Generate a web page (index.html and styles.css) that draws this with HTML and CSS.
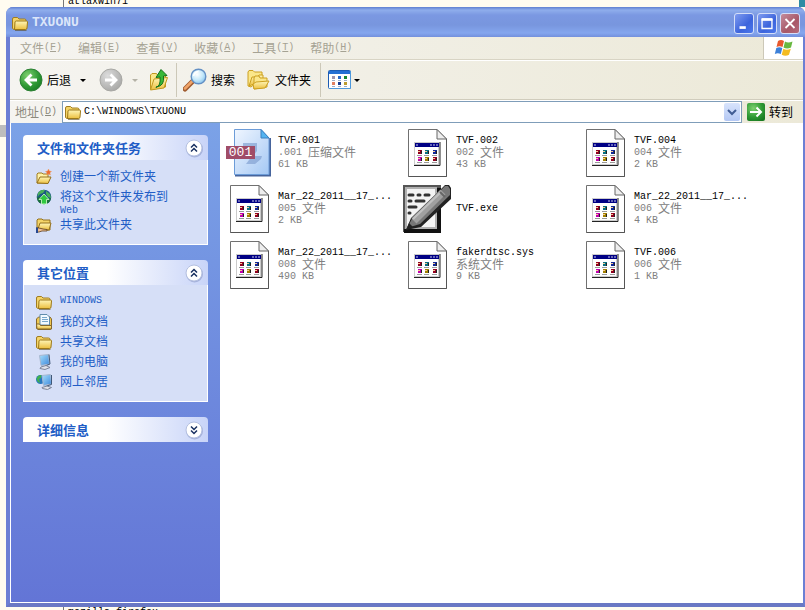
FILE: index.html
```html
<!DOCTYPE html>
<html lang="zh-CN">
<head>
<meta charset="utf-8">
<title>TXUONU</title>
<link rel="stylesheet" href="styles.css">
</head>
<body>
<svg class="defs" aria-hidden="true">
  <defs>
    <linearGradient id="gold" x1="0" y1="0" x2="0" y2="1"><stop offset="0" stop-color="#fff6b8"/><stop offset="1" stop-color="#ecc040"/></linearGradient>
    <radialGradient id="green" cx=".35" cy=".3" r=".8"><stop offset="0" stop-color="#7fd070"/><stop offset=".6" stop-color="#2f9a35"/><stop offset="1" stop-color="#187a22"/></radialGradient>
    <radialGradient id="grey" cx=".35" cy=".3" r=".8"><stop offset="0" stop-color="#dcdcdc"/><stop offset="1" stop-color="#a4a4a2"/></radialGradient>
    <radialGradient id="lens" cx=".4" cy=".35" r=".8"><stop offset="0" stop-color="#fff"/><stop offset=".5" stop-color="#c4e8fa"/><stop offset="1" stop-color="#6eb4e8"/></radialGradient>
    <linearGradient id="zip" x1="0" y1="0" x2="1" y2="1"><stop offset="0" stop-color="#f0f6ff"/><stop offset="1" stop-color="#a4c8f4"/></linearGradient>
    <linearGradient id="screen" x1="0" y1="0" x2="1" y2="1"><stop offset="0" stop-color="#a8e0fc"/><stop offset="1" stop-color="#3c88dc"/></linearGradient>
    <symbol id="folder" viewBox="0 0 16 16">
      <path d="M.5 13.500V4q0-1.500 1.500-1.500h3.500l1.500 1.500h5.500q1.500 0 1.500 1.500V13l-1 1.500H2z" fill="#f4d468" stroke="#a07c20"/>
      <path d="M3 7q.3-1 1.300-1H14.500q1 0 1 1L15 13q0 1.500-1.500 1.500H2.500z" fill="url(#gold)" stroke="#9c7818"/>
      <path d="M3 15.500h11.500" stroke="#5c4c20" opacity=".6"/>
    </symbol>
    <symbol id="newfolder" viewBox="0 0 16 16">
      <path d="M1 14V5l1-1h4l1 1h5v9z" fill="#fff2a8" stroke="#a07c20"/>
      <path d="M1 14 4 8h11l-3 6.500z" fill="url(#gold)" stroke="#94701c"/>
      <path d="m12.500 0 .9 2 2.100.5-1.600 1.300.5 2.200-1.900-1.100-2 1.100.5-2.200L9.500 2.500l2.100-.4z" fill="#e86830" stroke="#f4a060" stroke-width=".5"/>
    </symbol>
    <symbol id="publish" viewBox="0 0 16 16">
      <circle cx="8" cy="8" r="7.300" fill="#1c5884"/>
      <path d="M2 4Q5 0 9 1L7 4 4 5 1.500 8zM10 2l4 3 1 4-3-1-2-3z" fill="#48b058"/>
      <path d="M1 9q3-2 7 0t7 0q-1 6-7 6.300Q2 15 1 9" fill="#1c7038"/>
      <path d="m8 5 5 5.500h-2.500v4.500h-5v-4.500H3z" fill="#30c840" stroke="#d8ffd0" stroke-width=".8"/>
    </symbol>
    <symbol id="share" viewBox="0 0 16 16">
      <path d="M1 13V3l1-1h4l1 1h7v10z" fill="#f4d468" stroke="#94701c"/>
      <path d="M2 12 4 6h11l-2 7z" fill="url(#gold)" stroke="#94701c"/>
      <path d="M0 11h3l4 1 4 .5v1.500H6L3 15H0z" fill="#f0c090" stroke="#5c3c20" stroke-width=".8"/>
      <path d="M0 10.500h2V16H0z" fill="#284890"/>
    </symbol>
    <symbol id="documents" viewBox="0 0 16 16">
      <path d="M.5 14V5l2-2H14l1.500 2v9l-1 1.500H2z" fill="#f0c850" stroke="#84682c"/>
      <path d="M4 11V.5h7L13.500 3v8z" fill="#f2faff" stroke="#608cac"/>
      <path d="M6 3.500h5M6 5.500h6M6 7.500h6" stroke="#78a8cc"/>
      <path d="M.5 10h3l1 1.500h11V15H1z" fill="url(#gold)" stroke="#84682c"/>
    </symbol>
    <symbol id="computer" viewBox="0 0 16 16">
      <path d="m3.500 1.500 9-1 1 9.500-8.500 1.500z" fill="url(#screen)" stroke="#a8b8d0"/>
      <path d="m13 .5 1 9.500-5 2" fill="none" stroke="#405878"/>
      <path d="m5 13 5-1.500 4 2-5 2-5-1z" fill="#e0e2ea" stroke="#7c8498"/>
    </symbol>
    <symbol id="network" viewBox="0 0 16 16">
      <circle cx="4.500" cy="5.500" r="4.500" fill="#2878c0"/><path d="M.5 5q1-4 5-4L5 4 3 5l1 4Q1 8 .5 5" fill="#40b050"/>
      <path d="m6 1.500 8.500-1 1 9.500-8 1.500z" fill="url(#screen)" stroke="#a8b8d0"/>
      <path d="M15.500 1v9.500l-5 1.500" fill="none" stroke="#405878"/>
      <path d="m6 13.500 5-1.500 4.500 1.500-4 2-5-1z" fill="#e0e2ea" stroke="#7c8498"/>
    </symbol>
    <symbol id="up" viewBox="0 0 18 24">
      <path d="M.5 21V7l1.500-1.500h4.500l1 1.500h8v12z" fill="#fbe78a" stroke="#c09820"/>
      <path d="M.5 22 4 11l13.500-1.500L14 20z" fill="url(#gold)" stroke="#c09820"/>
      <path d="M6 19.500q5-1.500 4-10.500l-4 .5 5-8 6 6-3.500.5q1.500 10-7.500 11z" fill="#38b838" stroke="#13701c"/>
    </symbol>
    <symbol id="search" viewBox="0 0 24 24">
      <path d="m2 21 8-8" stroke="#a05c30" stroke-width="5" stroke-linecap="round"/><path d="m2 20.500 7-7" stroke="#f0a468" stroke-width="2.500" stroke-linecap="round"/>
      <circle cx="15.500" cy="8.500" r="7.300" fill="url(#lens)" stroke="#6490c4" stroke-width="1.400"/>
      <path d="M10.500 8q1-4 5-4.500" fill="none" stroke="#fff" stroke-width="1.500"/>
    </symbol>
    <symbol id="folders" viewBox="0 0 24 22">
      <path d="M1 17V3l1-1.500h4L7.500 3H15v6L4 18z" fill="#fbe78a" stroke="#cca020"/>
      <path d="m2 17 3-9h6l1-2h4v5z" fill="url(#gold)" stroke="#cca020"/>
      <path d="M7 20V9l1-2h4l1 2h7v9z" fill="#fbe78a" stroke="#cca020"/>
      <path d="m7 20-1-5 3-2 13-1-4 7z" fill="url(#gold)" stroke="#cca020"/>
    </symbol>
    <symbol id="views" viewBox="0 0 24 20">
      <rect x=".5" y=".5" width="22" height="18" rx="1" fill="#fff" stroke="#1c5cb4"/>
      <path d="M1 2.500h21" stroke="#2470d4" stroke-width="3"/>
      <path d="M22.500 1v17.500H1" fill="none" stroke="#4c98dc"/>
      <g><path fill="#9c94b0" d="M4 6h3v3H4z"/><path fill="#2868c8" d="M10 6h3v3h-3z"/><path fill="#188830" d="M16 6h3v3h-3z"/><path fill="#e08060" d="M4 12h3v3H4z"/><path fill="#183c90" d="M10 12h3v3h-3z"/><path fill="#bc9c30" d="M16 12h3v3h-3z"/></g>
      <path d="M4 10.500h3m3 0h3m3 0h3m-15 6h3m3 0h3m3 0h3" stroke="#9cb0c8"/>
    </symbol>
    <symbol id="flag" viewBox="0 0 20 18">
      <path d="M4 2q3-2 6 0L8.500 8q-3-1.500-6 0z" fill="#e8582c"/><path d="M11 2.500q3 2 7.500 0L17 8.500q-4 2-7.500 0z" fill="#68b840"/>
      <path d="M2.300 9q3-1.500 6 0L6.800 15q-3-1.500-6 0z" fill="#3c80d8"/><path d="M9.300 9.800q3.500 2 7.500 0L15 15.800q-3.500 2-7.300 0z" fill="#f4bc20"/>
    </symbol>
    <symbol id="file" viewBox="0 0 48 48">
      <path d="M5.500.5H34L43.500 10v37.500h-38z" fill="#fff" stroke="#707070"/>
      <path d="M43.500 10v37.500h-38" fill="none" stroke="#555"/>
      <path d="M34 .5V10h9.500z" fill="#eee" stroke="#666"/>
      <path d="M11 13h25.500v23H11z" fill="#ccc"/><path d="M12 18h23v17H12z" fill="#fff"/>
      <path d="M11 36.500h26V13" fill="none" stroke="#222"/>
      <path d="M12 14h24v4H12z" fill="#000084"/>
      <path d="M13 16h2m12 0h2m1 0h2m1 0h2" stroke="#cce"/>
      <path fill="#900020" d="M15 21h4v4h-4zm15 7h4v4h-4z"/><path fill="#087080" d="M22 21h4v4h-4z"/><path fill="#102898" d="M30 21h4v4h-4z"/>
      <path fill="#c000b0" d="M15 28h4v4h-4z"/><path fill="#a08000" d="M22 28h4v4h-4z"/>
      <path d="M15 22.500h2m5 0h2m6 0h2M15 29.500h2m5 0h2m6 0h2" stroke="#f8c890"/>
      <path d="M18.500 22v3m7-3v3m8-3v3M18.500 29v3m7-3v3m8-3v3" stroke="#222"/>
      <path d="M14 26.500h5m2 0h5m3 0h5M14 33.500h5m2 0h5m3 0h5" stroke="#999"/>
    </symbol>
    <symbol id="archive" viewBox="0 0 48 48">
      <path d="M10 46.500h35V9" fill="none" stroke="#46649c" stroke-width="2"/>
      <path d="M9.500.5H36l8 8.500v36.500H9.500z" fill="url(#zip)" stroke="#6c9cd8"/>
      <path d="M36 .5V9h8z" fill="#54b4f0" stroke="#3c80c0"/>
      <path d="M18 14h14v8l-4 5h9l-1 3-6 5h-3l-6 0 6-8 3-8h-6l-6-1z" fill="#7898cc" opacity=".6"/>
    </symbol>
    <symbol id="notepen" viewBox="0 0 48 48">
      <path d="M0 0h38v47H0z" fill="#555"/><path d="M2 2h32v43H2z" fill="#b0b0b0"/><path d="M4 4h28v38H4z" fill="#f4f4f4"/>
      <path d="M36 3v43H1" fill="none" stroke="#111" stroke-width="4"/>
      <path d="M6 10h4m5 0h2m5 0h4M6 16h2m5 0h8M6 22h7M6 28h1" stroke="#333" stroke-width="3" stroke-linecap="round"/>
      <path d="M3 45 8 33 36 6 42 0h4l2 3v11L18 42z" fill="#222"/>
      <path d="m4 43 6-11L37 6l5-5h3l2 3v6L17 39z" fill="#777"/>
      <path d="M11 36 40 7" stroke="#a0a0a0" stroke-width="7"/><path d="m10 34 28-27" stroke="#c0c0c0" stroke-width="2"/><path d="m37 7 5 5" stroke="#666" stroke-width="2"/><path d="m3 45 3-7 4 4z" fill="#222"/>
    </symbol>
    <symbol id="collapse" viewBox="0 0 20 20">
      <circle cx="10.500" cy="11" r="8.500" fill="#6878b0" opacity=".4"/><circle cx="10" cy="10" r="8" fill="#fff" stroke="#b4c0e0"/>
      <path d="m7 9.500 3-3 3 3m-6 4 3-3 3 3" fill="none" stroke="#183060" stroke-width="1.500"/>
    </symbol>
    <symbol id="expand" viewBox="0 0 20 20">
      <circle cx="10.500" cy="11" r="8.500" fill="#6878b0" opacity=".4"/><circle cx="10" cy="10" r="8" fill="#fff" stroke="#b4c0e0"/>
      <path d="m7 6.500 3 3 3-3m-6 4 3 3 3-3" fill="none" stroke="#183060" stroke-width="1.500"/>
    </symbol>
  </defs>
</svg>

<div class="behind behind-top"><span class="behind-text">atlaxwin71</span><span class="behind-edge"></span></div>
<main class="window">
  <header class="titlebar">
    <svg class="i16"><use href="#folder"/></svg>
    <h1>TXUONU</h1>
    <button class="wbtn" aria-label="最小化"><svg viewBox="0 0 20 20"><path d="M5 14.500h7" stroke="#fff" stroke-width="3"/></svg></button>
    <button class="wbtn" aria-label="最大化"><svg viewBox="0 0 20 20"><path d="M4.500 5.500h11v10h-11z" fill="none" stroke="#fff" stroke-width="1.500"/><path d="M4 5.500h12" stroke="#fff" stroke-width="3"/></svg></button>
    <button class="wbtn close" aria-label="关闭"><svg viewBox="0 0 20 20"><path d="m5 5 10 10M15 5 5 15" stroke="#fff" stroke-width="2"/></svg></button>
  </header>
  <div class="client">
    <nav class="menubar">
      <button>文件<span class="en">(<u>F</u>)</span></button>
      <button>编辑<span class="en">(<u>E</u>)</span></button>
      <button>查看<span class="en">(<u>V</u>)</span></button>
      <button>收藏<span class="en">(<u>A</u>)</span></button>
      <button>工具<span class="en">(<u>T</u>)</span></button>
      <button>帮助<span class="en">(<u>H</u>)</span></button>
      <span class="brand"><svg><use href="#flag"/></svg></span>
    </nav>
    <div class="toolbar">
      <button class="tool back"><svg class="i24" viewBox="0 0 24 24"><circle cx="12" cy="12" r="11" fill="url(#green)" stroke="#2c8034"/><path d="M18 12H7m5.500-5.500L7 12l5.500 5.500" fill="none" stroke="#fff" stroke-width="2.800"/></svg>后退<i class="caret"></i></button>
      <button class="tool forward" disabled aria-label="前进"><svg class="i24" viewBox="0 0 24 24"><circle cx="12" cy="12" r="11" fill="url(#grey)" stroke="#a8a8a4"/><path d="M6 12h11m-5.500-5.500L17 12l-5.500 5.500" fill="none" stroke="#fff" stroke-width="2.800"/></svg><i class="caret"></i></button>
      <button class="tool up" aria-label="向上"><svg><use href="#up"/></svg></button>
      <span class="sep"></span>
      <button class="tool search"><svg class="i24"><use href="#search"/></svg>搜索</button>
      <button class="tool folders"><svg class="i24"><use href="#folders"/></svg>文件夹</button>
      <span class="sep"></span>
      <button class="tool views" aria-label="查看"><svg><use href="#views"/></svg><i class="caret"></i></button>
    </div>
    <div class="address">
      <label for="path">地址<span class="en">(<u>D</u>)</span></label>
      <div class="combo">
        <svg class="i16"><use href="#folder"/></svg>
        <input id="path" type="text" value="C:\WINDOWS\TXUONU">
        <button class="drop" aria-label="展开"><svg viewBox="0 0 10 8"><path d="m1 2 4 4 4-4" fill="none" stroke="#405c94" stroke-width="2"/></svg></button>
      </div>
      <button class="go"><svg viewBox="0 0 18 18"><rect width="18" height="18" rx="2" fill="url(#green)"/><path d="M3 9h11M9.500 4.500 14 9l-4.500 4.500" fill="none" stroke="#fff" stroke-width="2"/></svg>转到</button>
    </div>
    <div class="content">
      <aside class="sidebar">
        <section class="panel">
          <div class="head"><h2>文件和文件夹任务</h2><button aria-label="折叠"><svg><use href="#collapse"/></svg></button></div>
          <ul class="tasks">
            <li><svg class="i16"><use href="#newfolder"/></svg><a href="#">创建一个新文件夹</a></li>
            <li class="two-line"><svg class="i16"><use href="#publish"/></svg><a href="#">将这个文件夹发布到<br><span class="en">Web</span></a></li>
            <li><svg class="i16"><use href="#share"/></svg><a href="#">共享此文件夹</a></li>
          </ul>
        </section>
        <section class="panel">
          <div class="head"><h2>其它位置</h2><button aria-label="折叠"><svg><use href="#collapse"/></svg></button></div>
          <ul class="tasks">
            <li><svg class="i16"><use href="#folder"/></svg><a class="latin" href="#">WINDOWS</a></li>
            <li><svg class="i16"><use href="#documents"/></svg><a href="#">我的文档</a></li>
            <li><svg class="i16"><use href="#folder"/></svg><a href="#">共享文档</a></li>
            <li><svg class="i16"><use href="#computer"/></svg><a href="#">我的电脑</a></li>
            <li><svg class="i16"><use href="#network"/></svg><a href="#">网上邻居</a></li>
          </ul>
        </section>
        <section class="panel">
          <div class="head"><h2>详细信息</h2><button aria-label="展开"><svg><use href="#expand"/></svg></button></div>
        </section>
      </aside>
      <ul class="files">
        <li><span class="thumb"><svg><use href="#archive"/></svg><b class="badge">001</b></span><div><p class="name latin">TVF.001</p><p><span class="latin">.001 </span>压缩文件</p><p class="latin">61 KB</p></div></li>
        <li><span class="thumb"><svg><use href="#file"/></svg></span><div><p class="name latin">TVF.002</p><p><span class="latin">002 </span>文件</p><p class="latin">43 KB</p></div></li>
        <li><span class="thumb"><svg><use href="#file"/></svg></span><div><p class="name latin">TVF.004</p><p><span class="latin">004 </span>文件</p><p class="latin">2 KB</p></div></li>
        <li><span class="thumb"><svg><use href="#file"/></svg></span><div><p class="name latin">Mar_22_2011__17_...</p><p><span class="latin">005 </span>文件</p><p class="latin">2 KB</p></div></li>
        <li><span class="thumb"><svg><use href="#notepen"/></svg></span><div><p class="name latin">TVF.exe</p></div></li>
        <li><span class="thumb"><svg><use href="#file"/></svg></span><div><p class="name latin">Mar_22_2011__17_...</p><p><span class="latin">006 </span>文件</p><p class="latin">4 KB</p></div></li>
        <li><span class="thumb"><svg><use href="#file"/></svg></span><div><p class="name latin">Mar_22_2011__17_...</p><p><span class="latin">008 </span>文件</p><p class="latin">490 KB</p></div></li>
        <li><span class="thumb"><svg><use href="#file"/></svg></span><div><p class="name latin">fakerdtsc.sys</p><p>系统文件</p><p class="latin">9 KB</p></div></li>
        <li><span class="thumb"><svg><use href="#file"/></svg></span><div><p class="name latin">TVF.006</p><p><span class="latin">006 </span>文件</p><p class="latin">1 KB</p></div></li>
      </ul>
    </div>
  </div>
</main>
<div class="behind behind-bottom"><span class="behind-text">mozilla firefox</span></div>
</body>
</html>
```
FILE: styles.css
```css
* { box-sizing: border-box; margin: 0; padding: 0; }
body {
  display: flex; flex-direction: column; height: 100vh; overflow: hidden;
  background: linear-gradient(#bdbdbd, #bdbdbd) 0 125px / 6px 12px no-repeat, #fffcf0;
  font: 12px/12px "Noto Sans CJK SC", sans-serif; color: #000;
}
svg { display: block; flex: none; }
.defs { position: absolute; width: 0; height: 0; }
ul { list-style: none; }
button { border: 0; background: none; font: inherit; color: inherit; display: flex; align-items: center; white-space: nowrap; }
.en { font-family: "Liberation Mono", monospace; font-size: 10px; line-height: 0; white-space: pre; }
.latin { font: 10px/12px "Liberation Mono", monospace; white-space: pre; }
.i16 { width: 16px; height: 16px; }
.i24 { width: 24px; height: 24px; }

.behind { display: flex; flex: none; overflow: hidden; padding-left: 63px; font: 10px/10px "Liberation Mono", monospace; }
.behind-text { border-left: 1px solid #777; padding-left: 4px; height: 10px; flex: 1; }
.behind-top { height: 7px; align-items: flex-end; }
.behind-bottom { height: 3px; }
.behind-bottom .behind-text { padding-top: 1px; }
.behind-edge { width: 6px; height: 7px; background: #2d8ca4; }

.window {
  flex: 1; min-height: 0; display: flex; flex-direction: column; margin-left: 6px;
  border: solid #6c7fd4; border-width: 0 2px 4px 4px; border-bottom-color: #6a78c4;
  border-radius: 7px 7px 0 0; background: #7b9be4;
}
.titlebar {
  height: 30px; flex: none; display: flex; align-items: center; gap: 3px;
  margin: 0 -2px 0 -4px; padding: 2px 5px 0 6px; border-radius: 7px 7px 0 0;
  background: linear-gradient(#5f7fd0, #8faeec 3px, #7b98e2 8px, #7896de 18px, #84a6ee 26px, #7390dc);
}
h1 { flex: 1; margin-left: 1px; font: bold 13px/16px "Liberation Mono", monospace; color: #dce6fa; }
.wbtn { width: 20px; height: 21px; border: 1px solid #d4def8; border-radius: 3px; background: linear-gradient(135deg, #809cf0, #3c64dc 60%, #4c78ec); }
.wbtn svg { width: 100%; height: 100%; }
.wbtn.close { background: linear-gradient(135deg, #c48c9c, #a85868 60%, #b46c7c); }

.client { flex: 1; min-height: 0; display: flex; flex-direction: column; background: #fff; }
.menubar, .toolbar, .address { display: flex; align-items: center; flex: none; background: linear-gradient(90deg, #f5f4f0, #ece9d8); }
.menubar { height: 23px; padding-left: 10px; gap: 16px; color: #a5a293; border-bottom: 1px solid #d8d4c4; }
.brand { margin-left: auto; align-self: stretch; width: 40px; display: grid; place-items: center; background: #fff; border-left: 1px solid #ccc8b8; }
.brand svg { width: 20px; height: 18px; }
.toolbar { height: 40px; border-top: 1px solid #fff; border-bottom: 1px solid #d0ccbc; padding-left: 9px; }
.caret { border: 3px solid transparent; border-top-color: #000; border-bottom: 0; }
.tool { gap: 4px; }
.back .caret { margin-left: 5px; }
.forward { margin-left: 13px; gap: 9px; }
.forward .caret { border-top-color: #b4b2a6; }
.up { margin: 0 8px 0 12px; }
.up svg { width: 18px; height: 24px; }
.sep { width: 1px; height: 34px; background: #ccc8b8; }
.search { margin-left: 6px; }
.folders { margin: 0 9px 0 12px; }
.views { margin-left: 7px; gap: 2px; }
.views svg { width: 24px; height: 20px; }
.address { height: 23px; border-top: 1px solid #fff; padding-left: 5px; gap: 5px; }
.address label { display: flex; align-items: center; color: #8c897c; white-space: nowrap; }
.combo { flex: 1; display: flex; align-items: center; height: 22px; background: #fff; border: 1px solid #7f9db9; padding: 1px 1px 1px 2px; }
.combo input { flex: 1; min-width: 0; border: 0; outline: 0; padding-left: 3px; background: none; font: 10px/16px "Liberation Mono", monospace; color: #000; }
.drop { width: 16px; height: 18px; justify-content: center; background: linear-gradient(#d8e4fc, #b4c8f4); border-radius: 2px; }
.drop svg { width: 10px; height: 8px; }
.go { gap: 4px; padding-right: 10px; }
.go svg { width: 18px; height: 18px; }

.content { flex: 1; min-height: 0; display: flex; }
.sidebar {
  width: 210px; flex: none; border-left: 1px solid #fff; border-bottom: 1px solid #fff; padding: 12px;
  display: flex; flex-direction: column; gap: 15px; background: linear-gradient(#7ba2e7, #6375d6);
}
.head { display: flex; align-items: center; justify-content: space-between; height: 25px; padding: 0 4px 0 14px; background: linear-gradient(90deg, #fff 45%, #c8d4f8); border-radius: 4px 4px 0 0; }
h2 { font-size: 13px; line-height: 16px; color: #215dc6; }
.head svg { width: 20px; height: 20px; }
.tasks { border: 1px solid #fff; border-top: 0; background: #d6dff7; padding: 6px 12px 10px; color: #215dc6; }
.tasks li { display: flex; gap: 8px; }
.tasks a { color: inherit; text-decoration: none; padding: 4px 0; white-space: nowrap; }
.tasks .two-line a { padding-bottom: 0; }
.tasks .i16 { margin-top: 3px; }

.files { flex: 1; display: grid; grid-template-columns: repeat(auto-fill, 178px); grid-auto-rows: 48px; gap: 8px 0; align-content: start; padding: 6px 5px; }
.files li { display: flex; align-items: center; gap: 5px; color: #808080; white-space: nowrap; }
.files li div { padding-bottom: 2px; }
.files p { display: flex; align-items: flex-start; height: 12px; }
.files .latin { line-height: 14px; }
.files .name { color: #000; }
.thumb { position: relative; }
.thumb svg { width: 48px; height: 48px; }
.badge { position: absolute; left: 1px; top: 17px; width: 29px; height: 13px; background: #a04c68; color: #fff; font: 13px/13px "Liberation Mono", monospace; text-align: center; }
```
